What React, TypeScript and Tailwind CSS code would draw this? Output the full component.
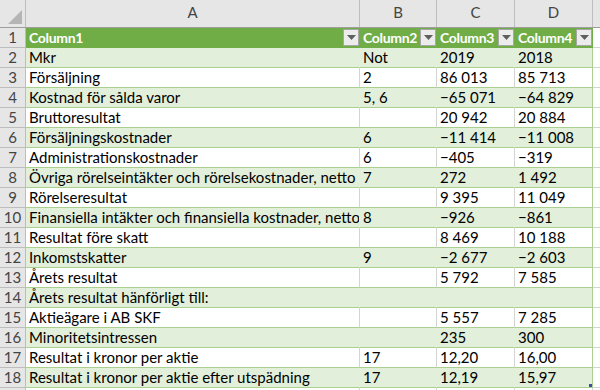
import React from "react";

const rows: [string, string, string, string][] = [
  ["Mkr", "Not", "2019", "2018"],
  ["Försäljning", "2", "86 013", "85 713"],
  ["Kostnad för sålda varor", "5, 6", "\u221265 071", "\u221264 829"],
  ["Bruttoresultat", "", "20 942", "20 884"],
  ["Försäljningskostnader", "6", "\u221211 414", "\u221211 008"],
  ["Administrationskostnader", "6", "\u2212405", "\u2212319"],
  ["Övriga rörelseintäkter och rörelsekostnader, netto", "7", "272", "1 492"],
  ["Rörelseresultat", "", "9 395", "11 049"],
  ["Finansiella intäkter och finansiella kostnader, netto", "8", "\u2212926", "\u2212861"],
  ["Resultat före skatt", "", "8 469", "10 188"],
  ["Inkomstskatter", "9", "\u22122 677", "\u22122 603"],
  ["Årets resultat", "", "5 792", "7 585"],
  ["Årets resultat hänförligt till:", "", "", ""],
  ["Aktieägare i AB SKF", "", "5 557", "7 285"],
  ["Minoritetsintressen", "", "235", "300"],
  ["Resultat i kronor per aktie", "17", "12,20", "16,00"],
  ["Resultat i kronor per aktie efter utspädning", "17", "12,19", "15,97"],
];

const font = { fontFamily: "Lato, 'Liberation Sans', sans-serif" };
const widths = ["w-[334px]", "w-[77px]", "w-[78px]", "w-[78px]"];

function Drop() {
  return (
    <div className="w-[16px] h-[17px] mr-[1px] border border-[#a6a6a6] bg-[#ececec] flex items-center justify-center shrink-0">
      <svg width="9" height="5" viewBox="0 0 9 5">
        <polygon points="0,0 9,0 4.5,5" fill="#5f5f5f" />
      </svg>
    </div>
  );
}

export default function App() {
  return (
    <div className="w-[600px] h-[390px] overflow-hidden bg-white text-[15px] text-black" style={font}>
      <div className="flex h-[28px] bg-[#e6e6e6] border-b border-[#9e9e9e] text-[#444]">
        <div className="w-[26px] border-r border-[#bdbdbd] relative shrink-0">
          <svg className="absolute right-[3px] bottom-[3px]" width="14" height="14" viewBox="0 0 14 14">
            <polygon points="14,0 14,14 0,14" fill="#b5b5b5" />
          </svg>
        </div>
        {["A", "B", "C", "D"].map((l, i) => (
          <div
            key={l}
            className={`${widths[i]} shrink-0 border-r border-[#bdbdbd] flex items-end justify-center pb-[4px]`}
          >
            {l}
          </div>
        ))}
        <div className="flex-1" />
      </div>
      <div className="flex h-[20px]">
        <div className="w-[26px] shrink-0 bg-[#e6e6e6] border-r border-b border-[#bdbdbd] flex items-center justify-center text-[#444]">1</div>
        {["Column1", "Column2", "Column3", "Column4"].map((c, i) => (
          <div
            key={c}
            className={`${widths[i]} shrink-0 bg-[#70ad47] text-white font-bold text-[14px] tracking-[-0.3px] flex items-center justify-between pl-[3px] border-b border-[#70ad47]`}
          >
            <span>{c}</span>
            <Drop />
          </div>
        ))}
        <div className="flex-1 border-b border-[#d4d4d4]" />
      </div>
      {rows.map((r, idx) => {
        const band = idx % 2 === 0;
        return (
          <div key={idx} className="flex h-[20px]">
            <div className="w-[26px] shrink-0 bg-[#e6e6e6] border-r border-b border-[#bdbdbd] flex items-center justify-center text-[#444]">
              {idx + 2}
            </div>
            {r.map((t, i) => (
              <div
                key={i}
                className={`${widths[i]} shrink-0 border-b border-r ${band ? "bg-[#e2efda]" : "bg-white"} ${
                  i === 3 ? "border-r-[#a9d08e]" : band ? "border-r-[#e2efda]" : "border-r-[#d4d4d4]"
                } border-b-[#a9d08e] flex items-center pl-[3px] whitespace-nowrap overflow-hidden relative`}
              >
                {t}
                {i === 3 && idx === rows.length - 1 && (
                  <div className="absolute right-[0px] bottom-[0px] w-[3px] h-[3px] bg-[#3c4fa0]" />
                )}
              </div>
            ))}
            <div className="flex-1 border-b border-[#d4d4d4]" />
          </div>
        );
      })}
      <div className="flex h-[20px]">
        <div className="w-[26px] shrink-0 bg-[#e6e6e6] border-r border-[#bdbdbd]" />
        <div className="w-[334px] shrink-0 border-r border-[#d4d4d4]" />
        <div className="w-[77px] shrink-0 border-r border-[#d4d4d4]" />
        <div className="w-[78px] shrink-0 border-r border-[#d4d4d4]" />
        <div className="w-[78px] shrink-0 border-r border-[#d4d4d4]" />
      </div>
    </div>
  );
}
